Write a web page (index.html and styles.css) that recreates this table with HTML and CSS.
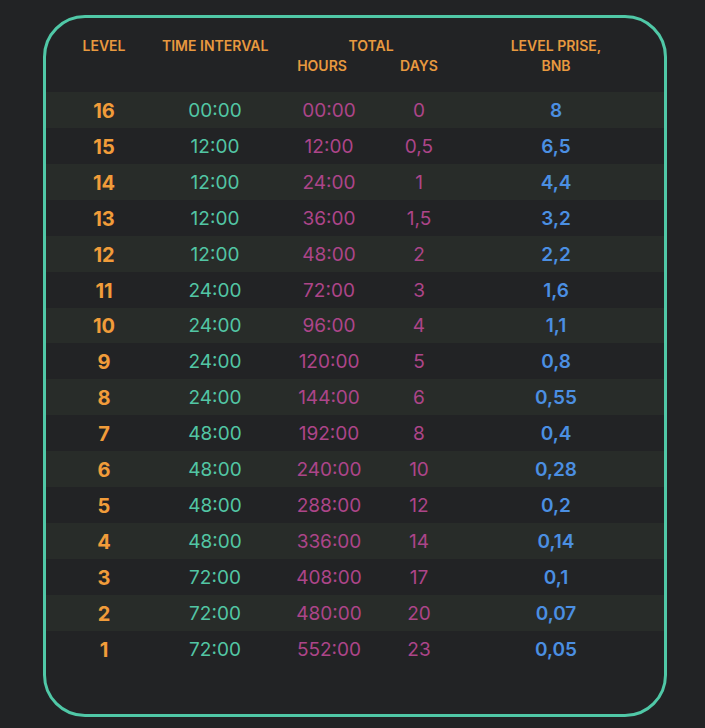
FILE: index.html
```html
<!DOCTYPE html>
<html>
<head>
<meta charset="utf-8">
<link rel="stylesheet" href="styles.css">
</head>
<body>
<div class="card">
  <div class="head">
    <div class="h-level">LEVEL</div>
    <div class="h-time">TIME INTERVAL</div>
    <div class="h-total">TOTAL</div>
    <div class="h-price">LEVEL PRISE,<br>BNB</div>
    <div class="h-hours">HOURS</div>
    <div class="h-days">DAYS</div>
  </div>
  <div class="rows">
    <div class="row alt"><span class="lv">16</span><span class="tm">00:00</span><span class="hr">00:00</span><span class="dy">0</span><span class="pr">8</span></div>
    <div class="row"><span class="lv">15</span><span class="tm">12:00</span><span class="hr">12:00</span><span class="dy">0,5</span><span class="pr">6,5</span></div>
    <div class="row alt"><span class="lv">14</span><span class="tm">12:00</span><span class="hr">24:00</span><span class="dy">1</span><span class="pr">4,4</span></div>
    <div class="row"><span class="lv">13</span><span class="tm">12:00</span><span class="hr">36:00</span><span class="dy">1,5</span><span class="pr">3,2</span></div>
    <div class="row alt"><span class="lv">12</span><span class="tm">12:00</span><span class="hr">48:00</span><span class="dy">2</span><span class="pr">2,2</span></div>
    <div class="row"><span class="lv">11</span><span class="tm">24:00</span><span class="hr">72:00</span><span class="dy">3</span><span class="pr">1,6</span></div>
    <div class="row alt"><span class="lv">10</span><span class="tm">24:00</span><span class="hr">96:00</span><span class="dy">4</span><span class="pr">1,1</span></div>
    <div class="row"><span class="lv">9</span><span class="tm">24:00</span><span class="hr">120:00</span><span class="dy">5</span><span class="pr">0,8</span></div>
    <div class="row alt"><span class="lv">8</span><span class="tm">24:00</span><span class="hr">144:00</span><span class="dy">6</span><span class="pr">0,55</span></div>
    <div class="row"><span class="lv">7</span><span class="tm">48:00</span><span class="hr">192:00</span><span class="dy">8</span><span class="pr">0,4</span></div>
    <div class="row alt"><span class="lv">6</span><span class="tm">48:00</span><span class="hr">240:00</span><span class="dy">10</span><span class="pr">0,28</span></div>
    <div class="row"><span class="lv">5</span><span class="tm">48:00</span><span class="hr">288:00</span><span class="dy">12</span><span class="pr">0,2</span></div>
    <div class="row alt"><span class="lv">4</span><span class="tm">48:00</span><span class="hr">336:00</span><span class="dy">14</span><span class="pr">0,14</span></div>
    <div class="row"><span class="lv">3</span><span class="tm">72:00</span><span class="hr">408:00</span><span class="dy">17</span><span class="pr">0,1</span></div>
    <div class="row alt"><span class="lv">2</span><span class="tm">72:00</span><span class="hr">480:00</span><span class="dy">20</span><span class="pr">0,07</span></div>
    <div class="row"><span class="lv">1</span><span class="tm">72:00</span><span class="hr">552:00</span><span class="dy">23</span><span class="pr">0,05</span></div>
  </div>
</div>
</body>
</html>
```
FILE: styles.css
```css
html, body {
  margin: 0;
  padding: 0;
  background: #222325;
}
body {
  font-family: Inter, "Noto Sans", sans-serif;
  width: 705px;
  height: 728px;
  overflow: hidden;
}
.card {
  box-sizing: border-box;
  margin: 15px 0 0 43px;
  width: 624px;
  height: 702px;
  border: 3px solid #50c8a7;
  border-radius: 42px;
  padding-top: 18px;
}
.head, .row {
  display: grid;
  grid-template-columns: 116px 106px 122px 58px 216px;
  text-align: center;
}
.head {
  grid-template-rows: 20px 20px;
  font-size: 14px;
  font-weight: 600;
  line-height: 20px;
  color: #e8993f;
  margin-bottom: 16px;
}
.h-level { grid-column: 1; grid-row: 1; }
.h-time { grid-column: 2; grid-row: 1; white-space: nowrap; }
.h-total { grid-column: 3 / 5; grid-row: 1; padding-left: 26px; }
.h-hours { grid-column: 3; grid-row: 2; padding-right: 14px; }
.h-days { grid-column: 4; grid-row: 2; }
.h-price { grid-column: 5; grid-row: 1 / 3; }
.row {
  box-sizing: border-box;
  height: 35.93px;
  padding-top: 2px;
  align-items: center;
  font-size: 19px;
  line-height: 24px;
}
.row.alt { background: #282c29; }
.lv { color: #f19c3a; font-weight: 700; font-size: 20px; }
.tm { color: #52c6a4; }
.hr, .dy { color: #ad4589; }
.pr { color: #4b8fe2; font-weight: 600; }
```
